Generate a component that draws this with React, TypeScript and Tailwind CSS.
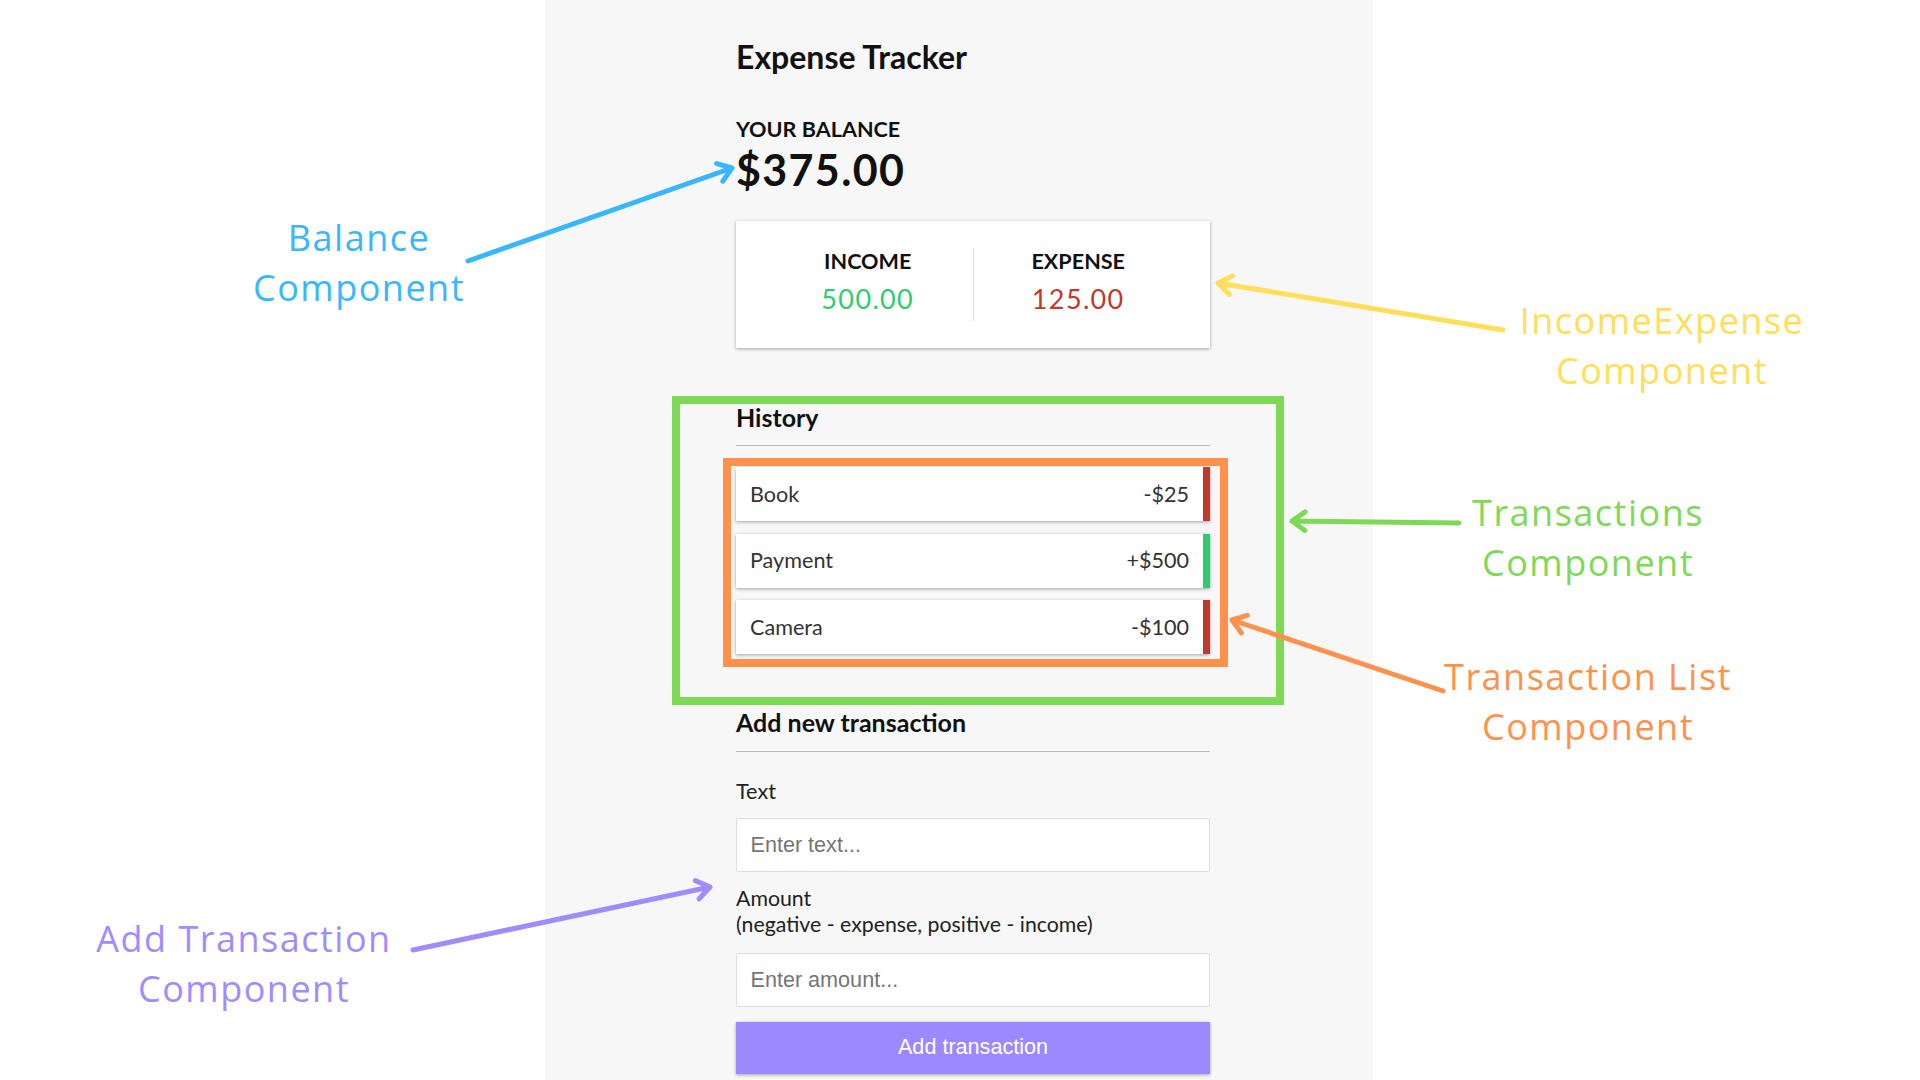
import React from 'react';

const cardShadow = 'shadow-[0_1px_4px_rgba(0,0,0,0.12),0_1px_3px_rgba(0,0,0,0.24)]';

type Tx = { text: string; amount: string; plus: boolean };

const transactions: Tx[] = [
  { text: 'Book', amount: '-$25', plus: false },
  { text: 'Payment', amount: '+$500', plus: true },
  { text: 'Camera', amount: '-$100', plus: false },
];

// note arrows drawn over the page
const Arrow: React.FC<{ x1: number; y1: number; x2: number; y2: number; color: string }> = ({ x1, y1, x2, y2, color }) => {
  const ang = Math.atan2(y2 - y1, x2 - x1);
  const len = 16;
  const spread = 0.62;
  const ax = x2 - len * Math.cos(ang - spread);
  const ay = y2 - len * Math.sin(ang - spread);
  const bx = x2 - len * Math.cos(ang + spread);
  const by = y2 - len * Math.sin(ang + spread);
  return (
    <path
      d={`M${x1} ${y1} L${x2} ${y2} M${ax} ${ay} L${x2} ${y2} L${bx} ${by}`}
      stroke={color}
      strokeWidth={5}
      strokeLinecap="round"
      strokeLinejoin="round"
      fill="none"
    />
  );
};

const Note: React.FC<{ cx: number; top: number; color: string; lines: string[] }> = ({ cx, top, color, lines }) => (
  <div
    className="absolute w-[400px] text-center text-[36px] leading-[50px] tracking-[1.5px] font-['Open_Sans',sans-serif]"
    style={{ left: cx - 200, top, color }}
  >
    {lines.map((l) => (
      <div key={l}>{l}</div>
    ))}
  </div>
);

const Header = () => (
  <h2 className="text-[32px] leading-[38.4px] font-bold text-[#111]">Expense Tracker</h2>
);

const Balance = () => (
  <div className="mt-[40px]">
    <h4 className="text-[21.6px] leading-[26px] font-bold text-[#111]">YOUR BALANCE</h4>
    <h1 className="mt-[2px] text-[43px] leading-[52px] font-bold tracking-[1.35px] text-[#111]">$375.00</h1>
  </div>
);

const IncomeExpense = () => (
  <div className={`mt-[25px] flex bg-white p-[27px] ${cardShadow}`}>
    <div className="flex-1 h-[73px] text-center border-r border-[#dedede]">
      <h4 className="text-[21.6px] leading-[26px] font-bold text-[#111]">INCOME</h4>
      <p className="mt-[9px] text-[27px] leading-[32px] tracking-[1.35px] text-[#2ecc71]">500.00</p>
    </div>
    <div className="flex-1 h-[73px] text-center">
      <h4 className="text-[21.6px] leading-[26px] font-bold text-[#111]">EXPENSE</h4>
      <p className="mt-[9px] text-[27px] leading-[32px] tracking-[1.35px] text-[#c0392b]">125.00</p>
    </div>
  </div>
);

const TransactionList = () => (
  <ul className="mt-[21px] flex flex-col gap-[12.5px]">
    {transactions.map((t) => (
      <li
        key={t.text}
        className={`flex h-[54px] items-center justify-between bg-white pl-[14px] pr-[14px] text-[21.6px] text-[#333] border-r-[7px] ${
          t.plus ? 'border-[#2ecc71]' : 'border-[#c0392b]'
        } ${cardShadow}`}
      >
        <span>{t.text}</span>
        <span>{t.amount}</span>
      </li>
    ))}
  </ul>
);

const Transactions = () => (
  <div className="mt-[54px]">
    <h3 className="pb-[12.7px] border-b border-[#bbb] text-[25px] leading-[30px] font-bold text-[#111]">History</h3>
    <TransactionList />
  </div>
);

const AddTransaction = () => (
  <div className="mt-[53px]">
    <h3 className="pb-[13.7px] border-b border-[#bbb] text-[25px] leading-[30px] font-bold text-[#111]">Add new transaction</h3>
    <label className="block mt-[26.5px] text-[21.6px] leading-[26px] text-[#222]">Text</label>
    <input
      className="mt-[14px] block w-full h-[54px] px-[13.5px] bg-white border border-[#dedede] rounded-[2px] text-[21.6px] font-['Liberation_Sans',Arial,sans-serif] placeholder:text-[#757575] outline-none"
      placeholder="Enter text..."
    />
    <label className="block mt-[14px] text-[21.3px] leading-[25.9px] text-[#222]">
      Amount
      <br />
      (negative - expense, positive - income)
    </label>
    <input
      className="mt-[14.5px] block w-full h-[54px] px-[13.5px] bg-white border border-[#dedede] rounded-[2px] text-[21.6px] font-['Liberation_Sans',Arial,sans-serif] placeholder:text-[#757575] outline-none"
      placeholder="Enter amount..."
    />
    <button
      className={`mt-[15px] block w-full h-[52px] bg-[#9c88ff] text-white text-[21.6px] font-['Liberation_Sans',Arial,sans-serif] ${cardShadow}`}
    >
      Add transaction
    </button>
  </div>
);

export default function App() {
  return (
    <div className="relative w-[1920px] h-[1080px] overflow-hidden bg-white font-['Lato',sans-serif]">
      <div className="ml-[545px] w-[828px] h-[1080px] bg-[#f7f7f7] pt-[38px]">
        <div className="ml-[191px] w-[474px]">
          <Header />
          <Balance />
          <IncomeExpense />
          <Transactions />
          <AddTransaction />
        </div>
      </div>

      <svg className="absolute inset-0 pointer-events-none" width={1920} height={1080} viewBox="0 0 1920 1080">
        <rect x={676} y={400} width={604} height={301} fill="none" stroke="#7ed957" strokeWidth={8} />
        <rect x={727} y={462} width={497} height={201} fill="none" stroke="#ff914d" strokeWidth={8} />
        <Arrow x1={468} y1={261} x2={732} y2={168} color="#38b6ff" />
        <Arrow x1={1503} y1={330} x2={1218} y2={283} color="#ffde59" />
        <Arrow x1={1459} y1={523} x2={1292} y2={521} color="#7ed957" />
        <Arrow x1={1443} y1={691} x2={1232} y2={620} color="#ff914d" />
        <Arrow x1={413} y1={950} x2={710} y2={887} color="#a08cff" />
      </svg>

      <Note cx={359} top={213} color="#38b6ff" lines={['Balance', 'Component']} />
      <Note cx={1662} top={296} color="#ffde59" lines={['IncomeExpense', 'Component']} />
      <Note cx={1588} top={488} color="#7ed957" lines={['Transactions', 'Component']} />
      <Note cx={1588} top={652} color="#ff914d" lines={['Transaction List', 'Component']} />
      <Note cx={244} top={914} color="#a08cff" lines={['Add Transaction', 'Component']} />
    </div>
  );
}
